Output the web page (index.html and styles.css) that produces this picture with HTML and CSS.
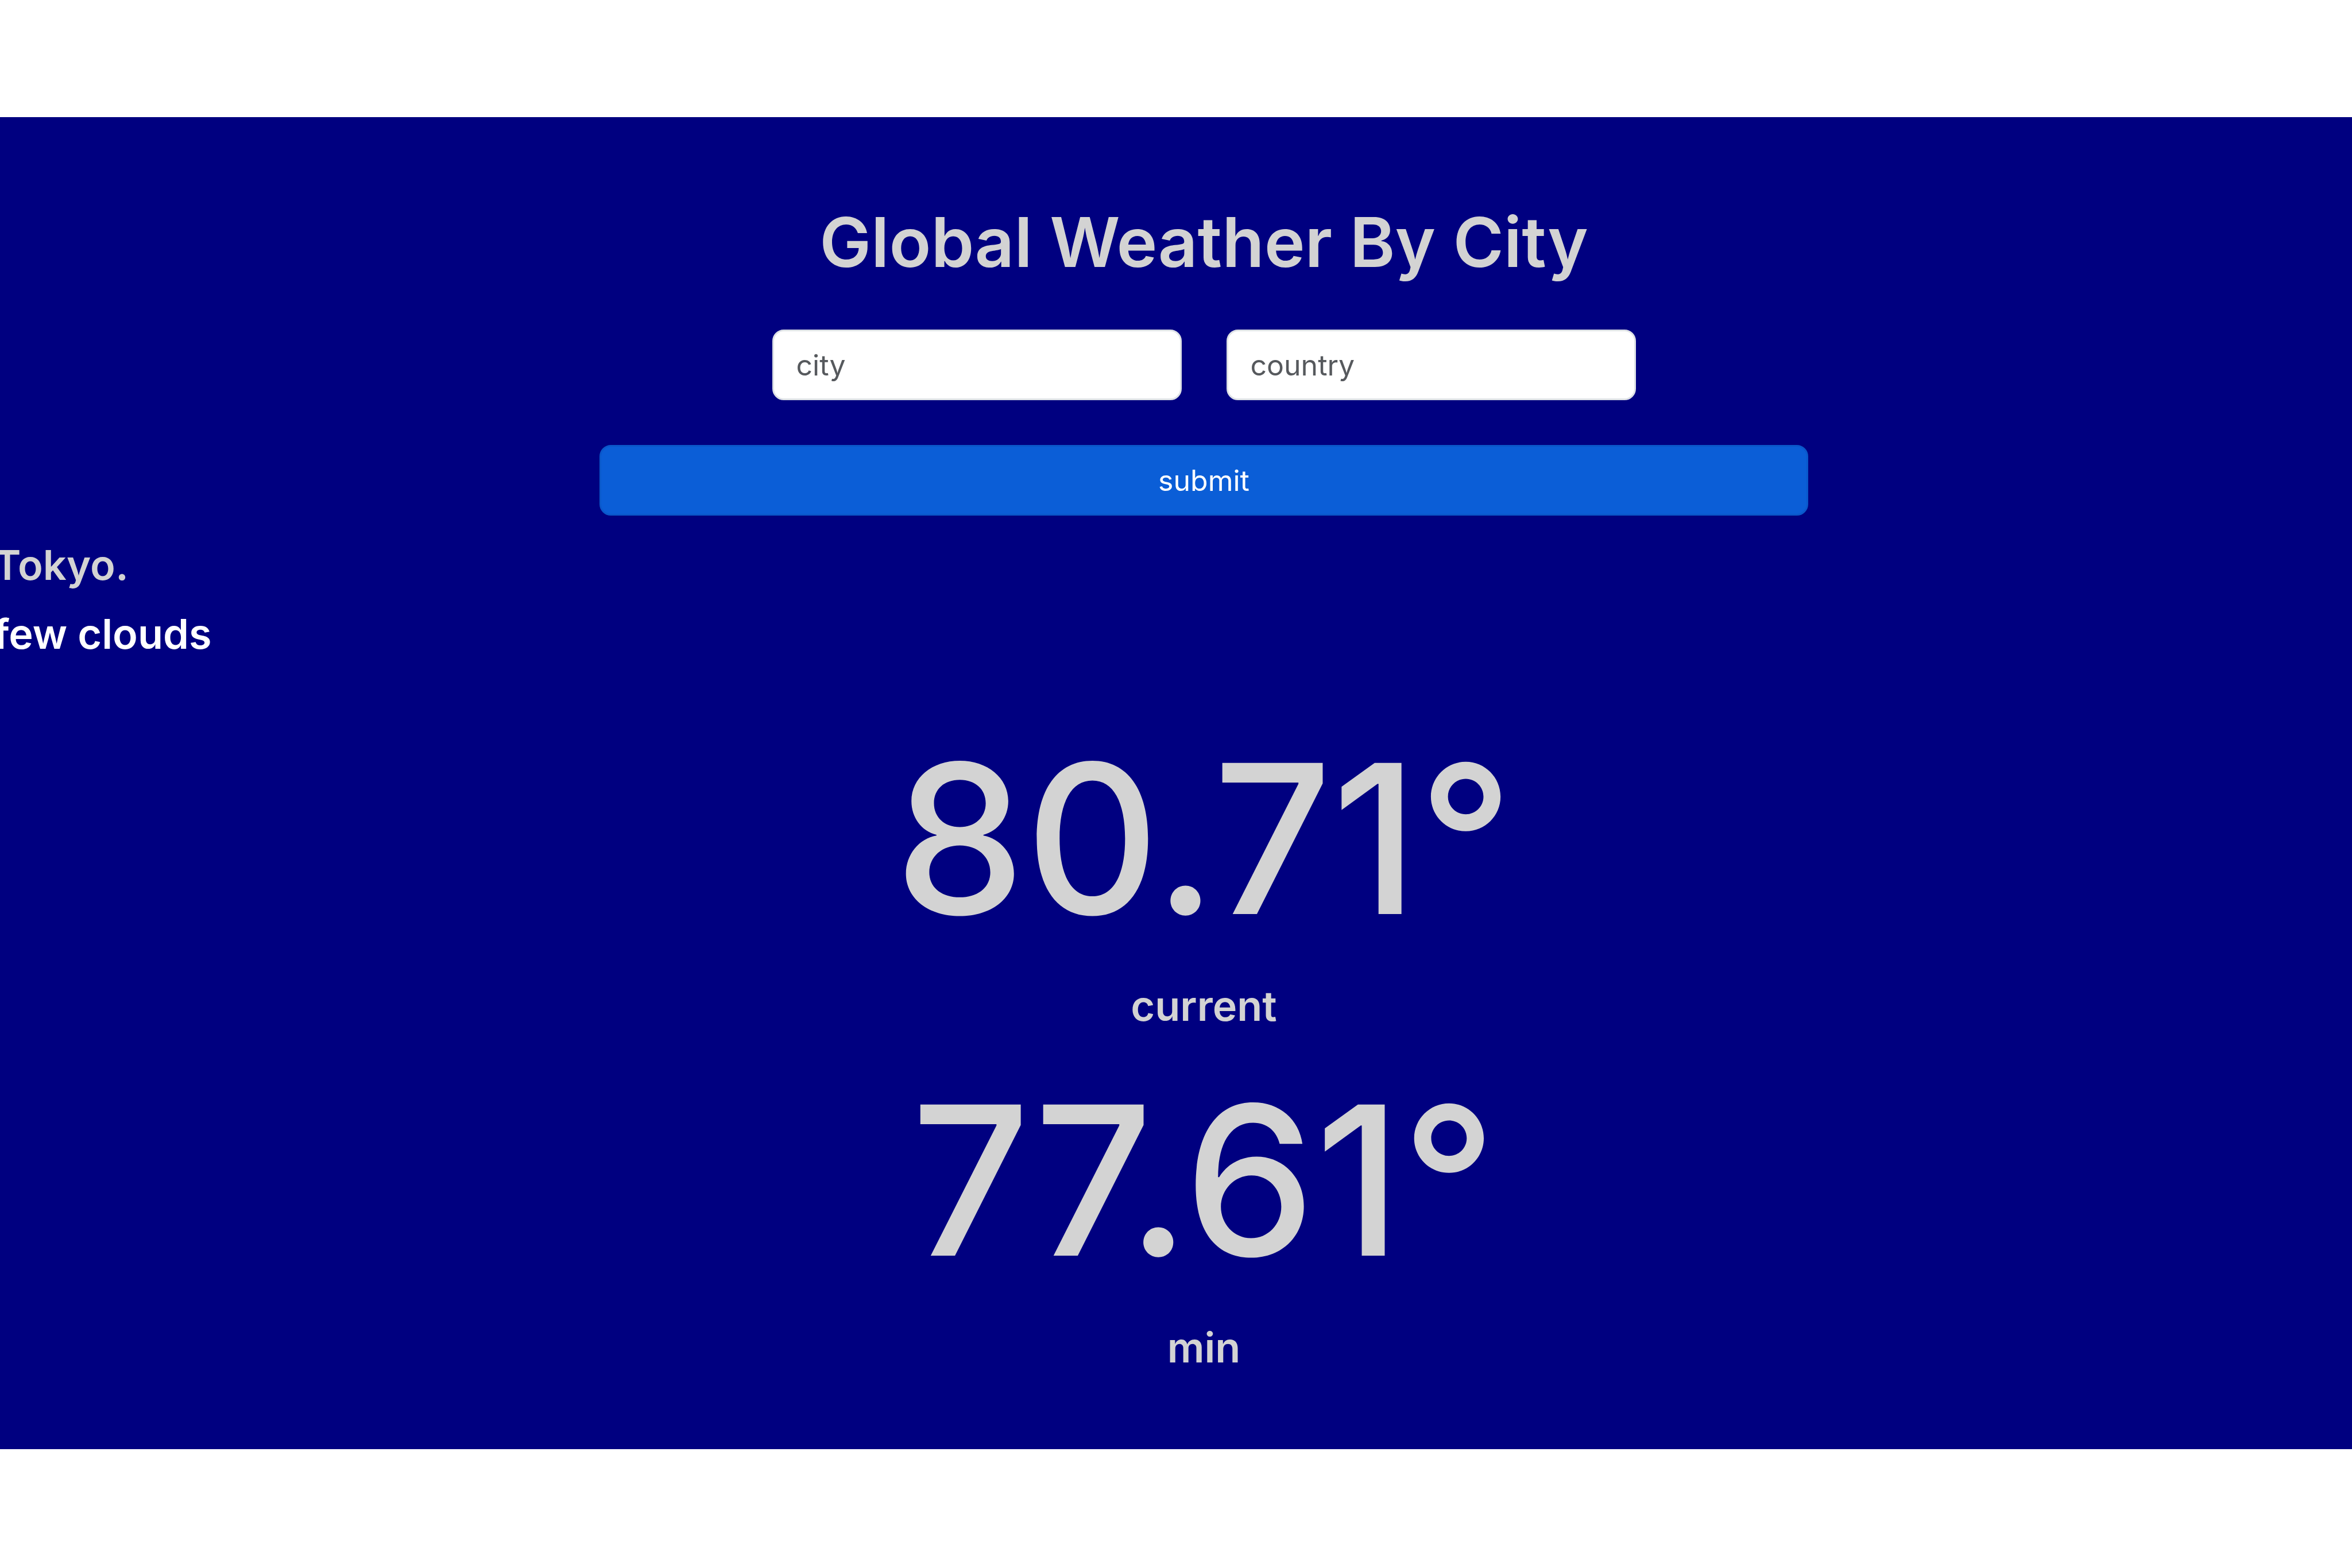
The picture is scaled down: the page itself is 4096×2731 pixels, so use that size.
FILE: index.html
```html
<!DOCTYPE html>
<html lang="en">
<head>
<meta charset="utf-8">
<title>Global Weather By City</title>
<link rel="stylesheet" href="styles.css">
</head>
<body>
<main class="weather">
  <h1 class="title">Global Weather By City</h1>
  <form class="search">
    <div class="fields">
      <input class="field" type="text" name="city" placeholder="city" aria-label="city">
      <input class="field" type="text" name="country" placeholder="country" aria-label="country">
    </div>
    <button class="submit" type="submit">submit</button>
  </form>
  <section class="summary">
    <h4 class="label">Tokyo.</h4>
    <h4 class="label label-bright">few clouds</h4>
  </section>
  <section class="readings">
    <div class="reading">
      <h2 class="value">80.71°</h2>
      <h4 class="label">current</h4>
    </div>
    <div class="reading">
      <h2 class="value">77.61°</h2>
      <h4 class="label">min</h4>
    </div>
  </section>
</main>
</body>
</html>
```
FILE: styles.css
```css
* {
  box-sizing: border-box;
}

body {
  margin: 0;
  padding: 204px 0;
  background: #fff;
  font-family: Inter, "Liberation Sans", sans-serif;
  overflow-x: hidden;
}

.weather {
  display: flex;
  flex-direction: column;
  padding: 140px 0 130px 97px;
  background: #000080;
  color: #d3d3d3;
}

.title,
.value,
.label {
  margin: 0;
  font-weight: 600;
}

.title {
  font-size: 120px;
  line-height: 156px;
  text-align: center;
}

.search {
  display: flex;
  flex-direction: column;
  align-items: center;
  gap: 78px;
  margin-top: 74px;
}

.fields {
  display: flex;
  justify-content: center;
  gap: 78px;
}

.field {
  width: 713px;
  height: 123px;
  padding: 0 39px;
  border: 3px solid #dee2e6;
  border-radius: 20px;
  background: #fff;
  color: #212529;
  font: 400 50px/78px Inter, "Liberation Sans", sans-serif;
}

.field::placeholder {
  color: #56595d;
  opacity: 1;
}

.submit {
  width: 100%;
  max-width: 2105px;
  height: 123px;
  border: 3px solid #0a58ca;
  border-radius: 20px;
  background: #0b5ed7;
  color: #fff;
  font: 400 50px/78px Inter, "Liberation Sans", sans-serif;
}

.summary {
  display: flex;
  flex-direction: column;
  gap: 26px;
  margin: 39px 0 0 -108px;
}

.label {
  font-size: 72px;
  line-height: 94px;
}

.label-bright {
  color: #fff;
}

.readings {
  display: flex;
  flex-direction: column;
  gap: 38px;
  margin-top: 91px;
  text-align: center;
}

.reading {
  display: flex;
  flex-direction: column;
  gap: 27px;
}

.value {
  font-size: 362px;
  font-weight: 500;
  line-height: 436px;
}
```
